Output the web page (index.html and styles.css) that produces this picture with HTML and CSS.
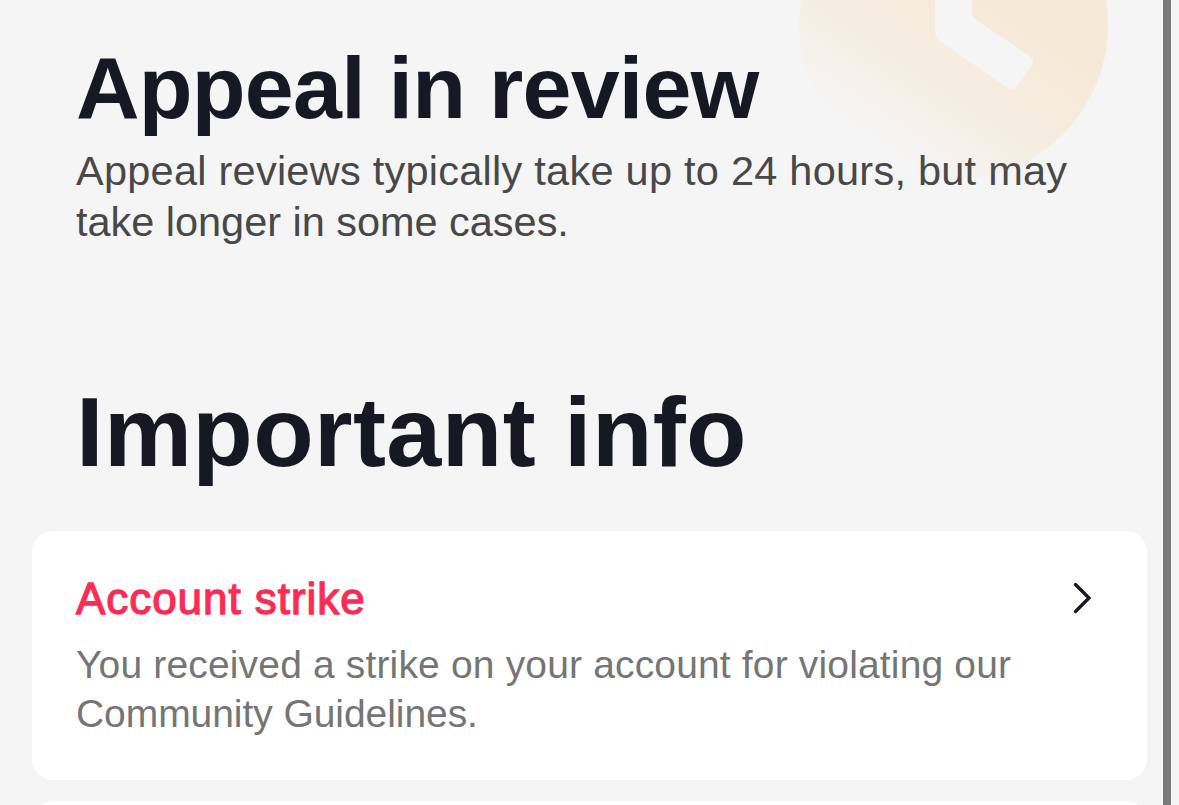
FILE: index.html
```html
<!DOCTYPE html>
<html lang="en">
<head>
<meta charset="utf-8">
<title>Appeal in review</title>
<link rel="stylesheet" href="styles.css">
</head>
<body>
<div class="screen">
  <main class="page">
    <header class="status">
      <h1 class="status-title">Appeal in review</h1>
      <p class="status-text"><span class="line">Appeal reviews typically take up to 24 hours, but may</span> <span class="line line-tight">take longer in some cases.</span></p>
      <svg class="clock" width="310" height="182" viewBox="799 0 310 182" aria-hidden="true">
        <defs>
          <linearGradient id="fade" gradientUnits="userSpaceOnUse" x1="860" y1="132" x2="960" y2="-18">
            <stop offset="0" stop-color="#fa9f1e" stop-opacity="0"/>
            <stop offset=".4" stop-color="#fa9f1e" stop-opacity=".08"/>
            <stop offset="1" stop-color="#ff9c1a" stop-opacity=".135"/>
          </linearGradient>
        </defs>
        <path fill="url(#fade)" fill-rule="evenodd" d="M799 25.500a154.500 154.500 0 1 0 309 0a154.500 154.500 0 1 0-309 0zM935 -40V31Q935 37 940 41L1007 87.500Q1013 91.500 1017 86L1031.500 65.500Q1035 60 1030 56.500L975 19Q972 17 972 13V-40z"/>
      </svg>
    </header>
    <h2 class="section-title">Important info</h2>
    <section class="cards">
      <article class="card">
        <div class="card-head">
          <h3 class="card-title">Account strike</h3>
          <svg class="chevron" width="22" height="34" viewBox="0 0 22 34" aria-hidden="true"><path d="M3.500 3.500L17 17L3.500 30.500"/></svg>
        </div>
        <p class="card-text"><span class="line">You received a strike on your account for violating our</span> <span class="line line-tight">Community Guidelines.</span></p>
      </article>
      <article class="card"></article>
    </section>
  </main>
  <div class="scrollbar"></div>
</div>
</body>
</html>
```
FILE: styles.css
```css
* {
  box-sizing: border-box;
}

body {
  margin: 0;
  overflow: hidden;
  background: #f5f5f5;
  font-family: "Liberation Sans", Arial, sans-serif;
}

h1, h2, h3, p {
  margin: 0;
  white-space: nowrap;
}

.screen {
  display: flex;
  height: 805px;
  padding-right: 8px;
  overflow: hidden;
}

.page {
  flex: 1;
  padding: 0 16px 0 32px;
}

.scrollbar {
  width: 8px;
  background: #7b7b7b;
}

.status {
  position: relative;
  padding: 38px 0 0 44px;
}

.status-title {
  font-size: 88px;
  line-height: 100px;
  letter-spacing: -0.750px;
  color: #161823;
}

.status-text {
  padding-top: 7px;
  font-size: 41.500px;
  line-height: 51px;
  letter-spacing: 0.250px;
  color: #484848;
}

.line {
  display: block;
}

.line-tight {
  letter-spacing: -0.030px;
}

.clock {
  position: absolute;
  top: 0;
  left: 767px;
}

.section-title {
  padding: 128px 0 0 44px;
  font-size: 99px;
  line-height: 114px;
  letter-spacing: 0.400px;
  color: #161823;
}

.cards {
  display: grid;
  gap: 21px;
  padding-top: 42px;
}

.card {
  height: 249px;
  padding: 42px 53px 0 44px;
  border-radius: 21px;
  background: #fff;
}

.card-head {
  display: flex;
  justify-content: space-between;
  align-items: center;
  height: 50px;
}

.card-title {
  padding-top: 1px;
  font-size: 44px;
  font-weight: 400;
  line-height: 50px;
  letter-spacing: 0.950px;
  color: #fe2c55;
  -webkit-text-stroke: 1.300px #fe2c55;
}

.chevron {
  fill: none;
  stroke: #161823;
  stroke-width: 3.300;
  stroke-linecap: round;
  stroke-linejoin: miter;
}

.card-text {
  padding-top: 18px;
  font-size: 39px;
  line-height: 48.500px;
  letter-spacing: 0.160px;
  color: #757575;
}

.card-text .line-tight {
  letter-spacing: -0.060px;
}
```
